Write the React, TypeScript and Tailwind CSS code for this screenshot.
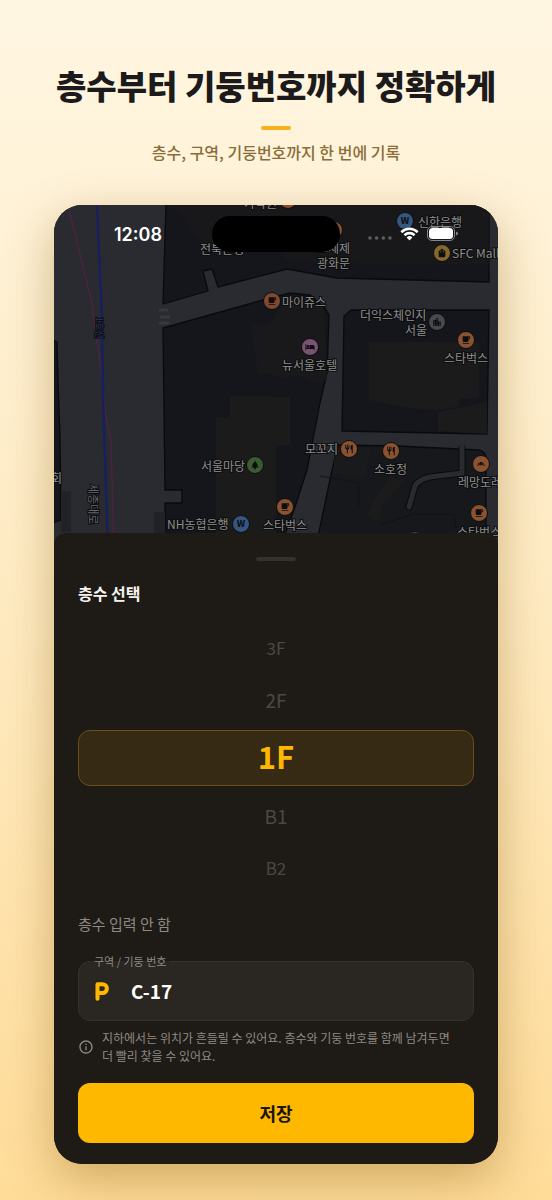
import { useState } from "react";
import type { IconType } from "react-icons";
import { MdBakeryDining, MdHotel, MdInfoOutline, MdLocalCafe, MdLocationCity, MdPark, MdRestaurant, MdShoppingBag } from "react-icons/md";

const FLOORS = [
  { id: "3F", size: "text-[17px]" },
  { id: "2F", size: "text-[19px]" },
  { id: "1F", size: "text-[19px]" },
  { id: "B1", size: "text-[19px]" },
  { id: "B2", size: "text-[17px]" },
];

type Pin = { x: number; y: number; color: string; icon?: IconType; glyph?: string };

const ORANGE = "#8a5230";
const BLUE = "#35577f";

const PINS: Pin[] = [
  { x: 234, y: -5, color: "#8a4a30" },
  { x: 280, y: 25, color: ORANGE },
  { x: 351, y: 16, color: BLUE, glyph: "W" },
  { x: 388, y: 48, color: "#86692a", icon: MdShoppingBag },
  { x: 218, y: 96, color: "#80492f", icon: MdLocalCafe },
  { x: 383, y: 117, color: "#48494c", icon: MdLocationCity },
  { x: 412, y: 135, color: ORANGE, icon: MdLocalCafe },
  { x: 256, y: 142, color: "#785472", icon: MdHotel },
  { x: 295, y: 244, color: ORANGE, icon: MdRestaurant },
  { x: 337, y: 246, color: ORANGE, icon: MdRestaurant },
  { x: 201, y: 260, color: "#3b5c31", icon: MdPark },
  { x: 427, y: 259, color: ORANGE, icon: MdBakeryDining },
  { x: 231, y: 302, color: ORANGE, icon: MdLocalCafe },
  { x: 425, y: 308, color: ORANGE, icon: MdLocalCafe },
  { x: 187, y: 319, color: BLUE, glyph: "W" },
  { x: 361, y: 335, color: "#48494c" },
];

const LABELS = [
  { x: 190, y: 3, text: "가락원" },
  { x: 146, y: 49, text: "전북은행" },
  { x: 263, y: 48, text: "그제제" },
  { x: 263, y: 63, text: "광화문" },
  { x: 364, y: 22, text: "신한은행" },
  { x: 398, y: 53, text: "SFC Mall" },
  { x: 228, y: 102, text: "마이쥬스" },
  { x: 306, y: 115, text: "더익스체인지" },
  { x: 351, y: 130, text: "서울" },
  { x: 390, y: 158, text: "스타벅스" },
  { x: 228, y: 165, text: "뉴서울호텔" },
  { x: 251, y: 249, text: "모꼬지" },
  { x: 320, y: 269, text: "소호정" },
  { x: 147, y: 266, text: "서울마당" },
  { x: -3, y: 278, text: "회" },
  { x: 404, y: 282, text: "레망도레" },
  { x: 113, y: 324, text: "NH농협은행" },
  { x: 209, y: 325, text: "스타벅스" },
  { x: 403, y: 332, text: "스타벅스" },
];

function StreetMap() {
  return (
    <svg viewBox="0 0 444 344" preserveAspectRatio="xMidYMid slice" className="block h-[344px] w-full bg-[#292b30]" aria-hidden="true">
      <g fill="#14161b" stroke="#090a0c" strokeWidth="1.3" strokeLinejoin="round">
        <path d="M112-2 109 99 154 86 149 66 158 64 164 82 233 64 283 73 435 77V-2Z" />
        <path d="M109 123 209 95 236 88 256 90 271 103 275 110 273 168 266 198 253 265 241 302 225 346H111V298H128V285H111Z" />
        <path d="M290 111 297 105H435L433 229 288 226Z" />
        <path d="M284 240 343 241 405 244 424 245Q432 246 432 254V346H261L278 265Z" fill="#16181c" />
        <path d="M-2 135 3 137 4 175 6 232 7 315-2 318Z" />
      </g>
      <g fill="#1b1b1b">
        <path d="M197 120 216 118 229 97 248 91 270 105 273 175 262 178 245 170 229 174 214 168 204 170Z" opacity=".7" />
        <path d="M114 0H435V60L283 58 230 54 226 45 150 42 130 14Z" opacity=".6" />
        <path d="M176 191H218V192H236V240H222V344H162V213H176Z" />
        <path d="M315 137H425V192L406 194 403 202 382 205 355 203 315 195Z" />
        <path d="M384 207 433 197V229L384 226Z" />
        <path d="M280 245 318 243 310 274 280 268Z" opacity=".7" />
        <path d="M336 271 350 276 329 300 324 317 313 309 321 294Z" />
        <path d="M7 286H17V327H7ZM100 307H111V344H100Z" fill="#202226" />
      </g>
      <path d="M364 309H400L402 325M266 271 305 278 305 302M326 320 362 308" fill="none" stroke="#101216" />
      <path d="M408 243V268L376 272Q364 275 361 281L355 302" fill="none" stroke="#090a0c" strokeWidth="7" strokeLinecap="round" />
      <path d="M408 240V268L376 272Q364 275 361 281L355 302" fill="none" stroke="#292b30" strokeWidth="5" strokeLinecap="round" />
      <path d="M105 105H114M106 112H116M105 118H115" stroke="#37393e" strokeWidth="3" />
      <path d="M14 0 38 98 48 172 51 205 57 238 60 344" fill="none" stroke="#4a2340" strokeWidth="1.5" />
      <path d="M43 0 48 112 49 190 54 344" fill="none" stroke="#171f5c" strokeWidth="2.5" />
      <g fill="#8f8d89" stroke="#0c0d10" strokeWidth="2" paintOrder="stroke" fontSize="12">
        {LABELS.map((label) => (
          <text key={`${label.x}-${label.y}`} x={label.x} y={label.y}>
            {label.text}
          </text>
        ))}
        <text transform="translate(42 112) rotate(90)" fontSize="9" fill="#2a356e">
          1호선
        </text>
        <text transform="translate(35 279) rotate(90)" fontSize="11" fill="#65666a">
          세종대로
        </text>
      </g>
      {PINS.map(({ x, y, color, icon: Icon, glyph }) => (
        <g key={`${x}-${y}`}>
          <circle cx={x} cy={y} r="8.500" fill={color} stroke="#0c0d10" />
          {Icon && <Icon x={x - 5} y={y - 5} size={10} color="#0d0e11" />}
          {glyph && (
            <text x={x} y={y + 3} textAnchor="middle" fontSize="9" fontWeight="900" fill="#10131a">
              {glyph}
            </text>
          )}
        </g>
      ))}
    </svg>
  );
}

function StatusBar() {
  return (
    <div className="absolute inset-x-0 top-0 flex items-start justify-between pr-10 pl-[60px] text-white">
      <span className="pt-4 font-['Inter',sans-serif] text-lg leading-7 font-semibold">12:08</span>
      <div className="absolute top-[11px] left-1/2 h-9 w-32 -translate-x-1/2 rounded-full bg-black" />
      <div className="flex items-center gap-2 pt-[21px]">
        <svg viewBox="0 0 24 4" className="mt-2 h-1 w-6 fill-[#5d5e62]" aria-hidden="true">
          <circle cx="2" cy="2" r="1.800" />
          <circle cx="8.600" cy="2" r="1.800" />
          <circle cx="15.300" cy="2" r="1.800" />
          <circle cx="22" cy="2" r="1.800" />
        </svg>
        <svg viewBox="0 0 17 12" className="h-[14px] w-[19px] fill-white" aria-hidden="true">
          <path d="M8.500 2.500c2.300 0 4.600.9 6.300 2.600.1.100.3.100.4 0l1.200-1.300c.1-.1.100-.3 0-.4C12-.9 5-.9.600 3.400c-.1.100-.1.300 0 .4l1.200 1.300c.1.100.3.100.4 0a9 9 0 0 1 6.300-2.600Z" />
          <path d="M8.500 6.500c1.300 0 2.500.5 3.400 1.300.1.100.3.100.5 0l1.200-1.300c.1-.1.100-.3 0-.4a7.400 7.400 0 0 0-10.200 0c-.1.100-.1.300 0 .4l1.200 1.300c.2.100.4.100.5 0a5 5 0 0 1 3.400-1.300Z" />
          <path d="M10.900 9.300c.1-.1.100-.3 0-.4a3.700 3.700 0 0 0-4.800 0c-.1.100-.1.300 0 .4l2.200 2.200c.1.100.3.100.4 0Z" />
        </svg>
        <svg viewBox="0 0 31 15" className="h-[15px] w-[31px]" aria-hidden="true">
          <rect x=".5" y=".5" width="27" height="14" rx="4.500" fill="none" stroke="#85868a" />
          <rect x="2" y="2" width="24" height="11" rx="3.500" fill="#fff" />
          <path d="M29 5.500v4q2-.5 2-2t-2-2Z" fill="#85868a" />
        </svg>
      </div>
    </div>
  );
}

function FloorPicker({ value, onChange }: { value: string | null; onChange: (floor: string) => void }) {
  return (
    <div role="radiogroup" aria-labelledby="floor-title" className="mt-[17px] flex flex-col">
      {FLOORS.map(({ id, size }) => {
        const selected = id === value;
        return (
          <label
            key={id}
            className={
              selected
                ? "my-1 flex h-14 items-center justify-center rounded-xl border border-[#6b5018] bg-[#362a15] pb-1 text-[31px] leading-10 font-bold text-[#ffb800]"
                : `flex h-[52px] items-center justify-center text-[#4b4844] ${size}`
            }
          >
            <input type="radio" name="floor" value={id} checked={selected} onChange={() => onChange(id)} className="sr-only" />
            {id}
          </label>
        );
      })}
    </div>
  );
}

export default function App() {
  const [floor, setFloor] = useState<string | null>("1F");
  const [spot, setSpot] = useState("C-17");

  return (
    <main className="min-h-screen bg-linear-to-b from-[#fff6e2] via-[#ffebc2] to-[#ffdc98] px-[54px] pt-[59px] pb-9 font-['Noto_Sans_CJK_KR',sans-serif]">
      <header className="flex flex-col items-center">
        <h1 className="text-[33px] leading-[52px] font-black whitespace-nowrap text-[#1c1a1a]">층수부터 기둥번호까지 정확하게</h1>
        <div className="mt-[15px] h-1 w-[30px] rounded-full bg-[#f9b020]" />
        <p className="mt-[10px] text-base leading-6 font-medium text-[#8b6c38]">층수, 구역, 기둥번호까지 한 번에 기록</p>
      </header>

      <section className="relative mt-[41px] overflow-hidden rounded-[28px] bg-[#1e1b16] shadow-[0_16px_48px_rgba(120,80,0,0.36)]">
        <StreetMap />
        <StatusBar />

        <div className="relative -mt-4 rounded-t-xl bg-[#1e1b16] px-6 pt-6 pb-[21px]">
          <div className="mx-auto h-1 w-10 rounded-full bg-[#35322d]" />
          <h2 id="floor-title" className="mt-5 text-base leading-6 font-bold text-[#f5f3ef]">
            층수 선택
          </h2>
          <FloorPicker value={floor} onChange={setFloor} />

          <button type="button" onClick={() => setFloor(null)} className="mt-[18px] block text-[15px] leading-6 text-[#8d8984]">
            층수 입력 안 함
          </button>

          <div className="relative mt-[25px] flex h-[60px] items-center rounded-xl border border-[#35322d] bg-[#2a2622] pl-4">
            <label htmlFor="spot" className="absolute -top-[9px] left-[11px] bg-linear-to-b from-[#1e1b16] from-50% to-[#2a2622] to-50% px-1 text-[11px] leading-4 text-[#8d8984]">
              구역 / 기둥 번호
            </label>
            <svg viewBox="0 0 14 19" className="h-[19px] w-[14px]" aria-hidden="true">
              <path d="M2.500 16.800V2.200H7.500a4.400 4.400 0 0 1 0 8.800H2.500" fill="none" stroke="#ffb800" strokeWidth="4" strokeLinecap="round" strokeLinejoin="round" />
            </svg>
            <input id="spot" value={spot} onChange={(e) => setSpot(e.target.value)} className="ml-[22px] min-w-0 flex-1 bg-transparent text-[19px] font-bold text-white outline-none" />
          </div>

          <div className="mt-2 flex items-center gap-2 text-[#8d8984]">
            <MdInfoOutline className="size-4 shrink-0" />
            <p className="text-xs leading-[18px]">
              지하에서는 위치가 흔들릴 수 있어요. 층수와 기둥 번호를 함께 남겨두면
              <br />더 빨리 찾을 수 있어요.
            </p>
          </div>

          <button type="button" className="mt-[18px] h-[60px] w-full rounded-xl bg-[#ffb800] text-lg font-bold text-[#1a1609]">
            저장
          </button>
        </div>
      </section>
    </main>
  );
}
